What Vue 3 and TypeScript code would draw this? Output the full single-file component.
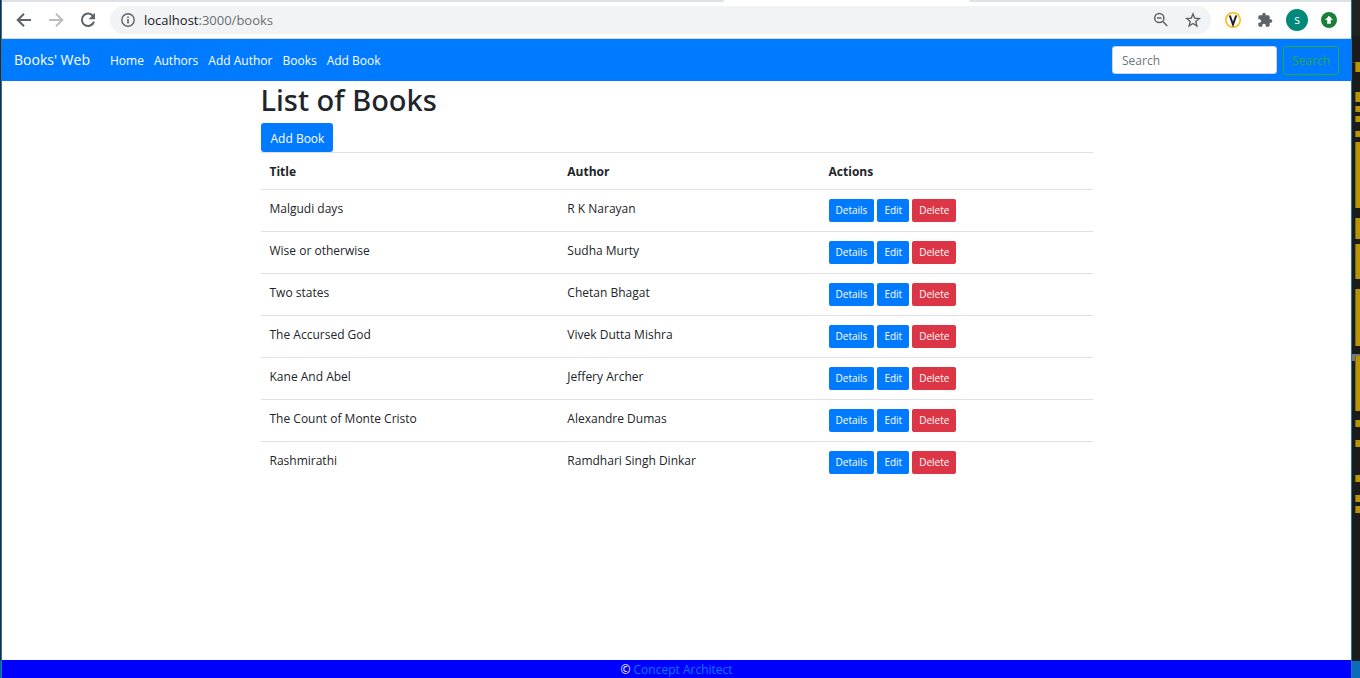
<script setup lang="ts">
import { ref } from 'vue'

interface Book {
  title: string
  author: string
}

interface Mark {
  y: number
  h: number
}

const query = ref('')

const links: string[] = ['Home', 'Authors', 'Add Author', 'Books', 'Add Book']

const books: Book[] = [
  { title: 'Malgudi days', author: 'R K Narayan' },
  { title: 'Wise or otherwise', author: 'Sudha Murty' },
  { title: 'Two states', author: 'Chetan Bhagat' },
  { title: 'The Accursed God', author: 'Vivek Dutta Mishra' },
  { title: 'Kane And Abel', author: 'Jeffery Archer' },
  { title: 'The Count of Monte Cristo', author: 'Alexandre Dumas' },
  { title: 'Rashmirathi', author: 'Ramdhari Singh Dinkar' },
]

const marks: Mark[] = [
  { y: 62, h: 10 }, { y: 92, h: 10 }, { y: 106, h: 6 }, { y: 116, h: 6 },
  { y: 131, h: 6 }, { y: 142, h: 66 }, { y: 218, h: 21 }, { y: 244, h: 35 },
  { y: 289, h: 57 }, { y: 356, h: 55 }, { y: 420, h: 7 }, { y: 440, h: 7 },
  { y: 475, h: 7 }, { y: 495, h: 7 }, { y: 506, h: 7 },
]
</script>

<template>
  <div class="desktop">
    <div class="edge"><span class="edge-task"></span></div>
    <div class="window">
      <header class="toolbar">
        <div class="tabs"><span class="tab-left"></span><span class="tab-right"></span></div>
        <div class="tools">
          <button class="tool" type="button" aria-label="Back">
            <svg width="16" height="16" viewBox="0 0 16 16"><path d="M15 8H2M8 1.7 1.7 8 8 14.3" fill="none" stroke="#5f6368" stroke-width="2" /></svg>
          </button>
          <button class="tool" type="button" aria-label="Forward">
            <svg width="16" height="16" viewBox="0 0 16 16"><path d="M1 8h13M8 1.7 14.3 8 8 14.3" fill="none" stroke="#babcbe" stroke-width="2" /></svg>
          </button>
          <button class="tool" type="button" aria-label="Reload">
            <svg width="16" height="16" viewBox="0 0 16 16"><path d="M13.3 4.4A6.2 6.2 0 1 0 14 9.6" fill="none" stroke="#5f6368" stroke-width="2" /><path d="M15 .8v6.4H8.6z" fill="#5f6368" /></svg>
          </button>
          <div class="omnibox">
            <svg width="14" height="14" viewBox="0 0 14 14"><circle cx="7" cy="7" r="6.2" fill="none" stroke="#5f6368" stroke-width="1.4" /><path d="M7 6v4.5M7 3.4v1.5" stroke="#5f6368" stroke-width="1.6" /></svg>
            <span class="url">localhost<span class="path">:3000/books</span></span>
            <button class="tool" type="button" aria-label="Zoom">
              <svg width="16" height="16" viewBox="0 0 16 16"><circle cx="6.3" cy="6" r="4.6" fill="none" stroke="#5f6368" stroke-width="1.5" /><path d="M4 6h4.6M9.8 9.5l4.5 4.5" stroke="#5f6368" stroke-width="1.5" fill="none" /></svg>
            </button>
            <button class="tool" type="button" aria-label="Bookmark">
              <svg width="16" height="16" viewBox="0 0 16 16"><path d="m8 1.9 1.7 4.2 4.6.4-3.5 3 1.1 4.4L8 11.5l-3.9 2.4 1.1-4.4-3.5-3 4.6-.4z" fill="none" stroke="#5f6368" stroke-width="1.4" /></svg>
            </button>
          </div>
          <button class="tool ext" type="button" aria-label="Extension">
            <svg width="16" height="16" viewBox="0 0 16 16"><circle cx="8" cy="8" r="7.2" fill="#fff" stroke="#fbbc14" stroke-width="1.6" /><path d="m4.8 3.5 3.2 9 3.2-9" fill="none" stroke="#202124" stroke-width="2" /></svg>
          </button>
          <button class="tool" type="button" aria-label="Extensions">
            <svg width="16" height="16" viewBox="0 0 24 24"><path d="M20.5 11H19V7a2 2 0 0 0-2-2h-4V3.5a2.5 2.5 0 0 0-5 0V5H4a2 2 0 0 0-2 2v3.8h1.5a2.7 2.7 0 0 1 0 5.4H2V20a2 2 0 0 0 2 2h3.8v-1.5a2.7 2.7 0 0 1 5.4 0V22H17a2 2 0 0 0 2-2v-4h1.5a2.5 2.5 0 0 0 0-5z" fill="#5f6368" /></svg>
          </button>
          <button class="avatar" type="button">s</button>
          <button class="tool" type="button" aria-label="Update">
            <svg width="16" height="16" viewBox="0 0 16 16"><circle cx="8" cy="8" r="8" fill="#188038" /><path d="M8 3.8 12 8H9.8v3.8H6.2V8H4z" fill="#fff" /></svg>
          </button>
        </div>
      </header>

      <nav class="navbar">
        <a class="brand" href="#">Books' Web</a>
        <ul class="links">
          <li v-for="link in links" :key="link"><a href="#">{{ link }}</a></li>
        </ul>
        <form class="search" @submit.prevent>
          <input v-model="query" type="search" placeholder="Search" aria-label="Search" />
          <button type="submit">Search</button>
        </form>
      </nav>

      <main class="content">
        <h1>List of Books</h1>
        <a class="btn add" href="#">Add Book</a>
        <table>
          <thead>
            <tr><th class="c-title">Title</th><th class="c-author">Author</th><th>Actions</th></tr>
          </thead>
          <tbody>
            <tr v-for="book in books" :key="book.title">
              <td>{{ book.title }}</td>
              <td>{{ book.author }}</td>
              <td class="c-actions">
                <div class="actions">
                  <button class="btn small" type="button">Details</button>
                  <button class="btn small" type="button">Edit</button>
                  <button class="btn small danger" type="button">Delete</button>
                </div>
              </td>
            </tr>
          </tbody>
        </table>
      </main>

      <footer class="footer">© <a href="#">Concept Architect</a></footer>
    </div>
    <div class="behind">
      <svg class="marks" width="8" height="661" viewBox="0 0 8 661">
        <rect width="8" height="36" fill="#222" />
        <rect y="62" width="4" height="1" fill="#3a3a3a" />
        <rect y="354" width="8" height="7" fill="#777" />
        <g v-for="m in marks" :key="m.y">
          <rect x="3" :y="m.y" width="5" :height="m.h" fill="#7a6510" />
          <rect x="4" :y="m.y" width="4" :height="m.h" fill="#b89500" />
        </g>
      </svg>
    </div>
  </div>
</template>

<style>
body {
  margin: 0;
}
</style>

<style scoped>
* {
  box-sizing: border-box;
}

.desktop {
  display: flex;
  min-height: 100vh;
  font-family: "Segoe UI", "Open Sans", "Noto Sans", sans-serif;
  font-size: 12px;
  line-height: 18px;
  color: #212529;
  background: #1b1b1b;
}

.edge {
  display: flex;
  align-items: flex-end;
  width: 2px;
  background: #2b2b2b;
  border-right: 1px solid #1c75bc;
}

.edge-task {
  width: 1px;
  height: 17px;
  background: #006b9f;
}

.window {
  display: flex;
  flex: 1;
  flex-direction: column;
  background: #fff;
  border-right: 1px solid #1c75bc;
}

.behind {
  display: flex;
  flex-direction: column;
  width: 8px;
  background: #0b6db7;
}

.marks {
  display: block;
  background: #1b1b1b;
}

button {
  font-family: inherit;
  cursor: pointer;
}

a {
  text-decoration: none;
}

.toolbar {
  border-bottom: 1px solid #d5dbd5;
}

.tabs {
  display: flex;
  justify-content: space-between;
  height: 2px;
}

.tab-left {
  width: 53.5%;
  background: #dee1e6;
  border-bottom-right-radius: 4px;
}

.tab-right {
  width: 28.3%;
  background: #dee1e6;
  border-bottom-left-radius: 4px;
}

.tools {
  display: flex;
  align-items: center;
  gap: 16px;
  height: 36px;
  padding: 0 14px;
}

.tool {
  display: block;
  width: 16px;
  height: 16px;
  padding: 0;
  background: none;
  border: 0;
}

.tool svg {
  display: block;
}

.omnibox {
  display: flex;
  flex: 1;
  align-items: center;
  gap: 16px;
  height: 28px;
  margin-left: -2px;
  padding: 0 10px 0 11px;
  background: #f1f3f4;
  border-radius: 14px;
}

.url {
  flex: 1;
  margin-left: -7px;
  font-size: 13px;
  color: #202124;
}

.path {
  color: #6b6f73;
}

.ext {
  margin-left: -2px;
}

.avatar {
  width: 22px;
  height: 22px;
  margin: 0 -3px;
  padding: 0;
  font-size: 12px;
  line-height: 20px;
  color: #fff;
  background: #00897b;
  border: 0;
  border-radius: 50%;
}

.navbar {
  display: flex;
  align-items: center;
  height: 42px;
  padding: 0 12px;
  background: #007bff;
}

.brand {
  margin-right: 20px;
  font-size: 14px;
  line-height: 20px;
  color: #fff;
}

.links {
  display: flex;
  flex: 1;
  gap: 10px;
  margin: 0;
  padding: 2px 0 0;
  list-style: none;
}

.links a {
  color: #fff;
}

.search {
  display: flex;
  gap: 6px;
}

.search input {
  width: 165px;
  height: 28px;
  padding: 2px 9px 0;
  font: inherit;
  color: #495057;
  appearance: none;
  background: #fff;
  border: 1px solid #ced4da;
  border-radius: 3px;
}

.search input::placeholder {
  color: #6c757d;
  opacity: 1;
}

.search button {
  height: 29px;
  padding: 0 8px;
  font-size: 12px;
  color: #28a745;
  background: none;
  border: 1px solid #28a745;
  border-radius: 3px;
}

.content {
  flex: 1;
  width: 100%;
  max-width: 832px;
  margin: 0 auto;
}

h1 {
  margin: 0 0 4px;
  font-family: "Segoe UI", "Noto Sans", "Open Sans", sans-serif;
  font-size: 29px;
  font-weight: 500;
  line-height: 38px;
}

.btn {
  color: #fff;
  background: #007bff;
  border: 0;
  border-radius: 3px;
}

.add {
  display: block;
  width: fit-content;
  padding: 7px 9px 4px 10px;
}

table {
  width: 100%;
  table-layout: fixed;
  border-spacing: 0;
}

th,
td {
  padding: 10px 9px 8px;
  text-align: left;
  vertical-align: top;
  border-top: 1px solid #dee2e6;
}

.c-title {
  width: 35.8%;
}

.c-author {
  width: 31.4%;
}

.c-actions {
  padding: 9px;
}

.actions {
  display: flex;
  gap: 3px;
}

.small {
  height: 23px;
  padding: 0 7px 2px;
  font-size: 10px;
  line-height: 20px;
  border-radius: 2px;
}

.danger {
  background: #dc3545;
}

.footer {
  height: 18px;
  line-height: 20px;
  color: #fff;
  text-align: center;
  background: #00f;
}

.footer a {
  color: #007bff;
}
</style>
